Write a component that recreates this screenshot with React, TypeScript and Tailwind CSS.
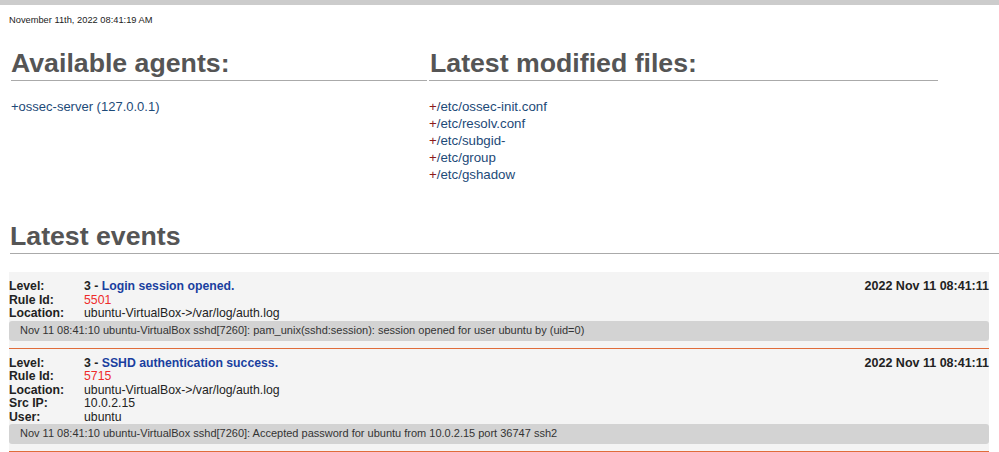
import React from "react";

const files = [
  "/etc/ossec-init.conf",
  "/etc/resolv.conf",
  "/etc/subgid-",
  "/etc/group",
  "/etc/gshadow",
];

type Row = { label: string; value: React.ReactNode };

function EventItem({
  level,
  desc,
  rows,
  log,
}: {
  level: string;
  desc: string;
  rows: Row[];
  log: string;
}) {
  return (
    <div className="bg-[#f4f4f4] pt-[8px] pb-[7px] border-b border-[#e06c3a] text-[12.25px] leading-[13.5px] text-[#222]">
      <div className="flex justify-between">
        <div className="flex">
          <div className="w-[75px] font-bold">Level:</div>
          <div className="font-bold">
            {level} - <span className="text-[#1a3f9f]">{desc}</span>
          </div>
        </div>
        <div className="font-bold text-[12.5px]">2022 Nov 11 08:41:11</div>
      </div>
      {rows.map((r) => (
        <div className="flex" key={r.label}>
          <div className="w-[75px] font-bold">{r.label}</div>
          <div>{r.value}</div>
        </div>
      ))}
      <div className="bg-[#d3d3d3] rounded-[3px] h-[20px] pl-[11px] flex items-center text-[11px] text-[#333]">
        {log}
      </div>
    </div>
  );
}

export default function App() {
  return (
    <div
      className="w-[999px] h-[452px] overflow-hidden bg-white text-[#333]"
      style={{ fontFamily: '"Liberation Sans", Arial, sans-serif' }}
    >
      <div className="h-[5px] bg-[#cccccc]" />
      <div className="pl-[9px] pt-[10px] text-[9.3px] leading-[11px] text-[#222]">
        November 11th, 2022 08:41:19 AM
      </div>
      <div className="flex pl-[11px] mt-[22px] gap-[2px]">
        <div className="w-[416px]">
          <h2 className="text-[26.7px] leading-[30px] font-bold text-[#555] border-b border-[#aaaaaa] pb-[2px]">
            Available agents:
          </h2>
          <div className="mt-[17px] text-[13px] leading-[17px] text-[#1d4a78]">
            +ossec-server (127.0.0.1)
          </div>
        </div>
        <div className="w-[509px]">
          <h2 className="text-[26.7px] leading-[30px] font-bold text-[#555] border-b border-[#aaaaaa] pb-[2px] pl-[1px]">
            Latest modified files:
          </h2>
          <div className="mt-[17px] text-[13.3px] leading-[17px] text-[#1d4a78]">
            {files.map((f) => (
              <div key={f}>
                <span className="text-[#8b1a1a]">+</span>
                {f}
              </div>
            ))}
          </div>
        </div>
      </div>
      <div className="pl-[10px] mt-[38px]">
        <h2 className="text-[26.7px] leading-[30px] font-bold text-[#555] border-b border-[#aaaaaa] pb-[2px]">
          Latest events
        </h2>
      </div>
      <div className="ml-[9px] mr-[10px] mt-[18px]">
        <EventItem
          level="3"
          desc="Login session opened."
          rows={[
            { label: "Rule Id:", value: <span className="text-[#ee2a2a]">5501</span> },
            { label: "Location:", value: "ubuntu-VirtualBox->/var/log/auth.log" },
          ]}
          log="Nov 11 08:41:10 ubuntu-VirtualBox sshd[7260]: pam_unix(sshd:session): session opened for user ubuntu by (uid=0)"
        />
        <EventItem
          level="3"
          desc="SSHD authentication success."
          rows={[
            { label: "Rule Id:", value: <span className="text-[#ee2a2a]">5715</span> },
            { label: "Location:", value: "ubuntu-VirtualBox->/var/log/auth.log" },
            { label: "Src IP:", value: "10.0.2.15" },
            { label: "User:", value: "ubuntu" },
          ]}
          log="Nov 11 08:41:10 ubuntu-VirtualBox sshd[7260]: Accepted password for ubuntu from 10.0.2.15 port 36747 ssh2"
        />
      </div>
    </div>
  );
}
